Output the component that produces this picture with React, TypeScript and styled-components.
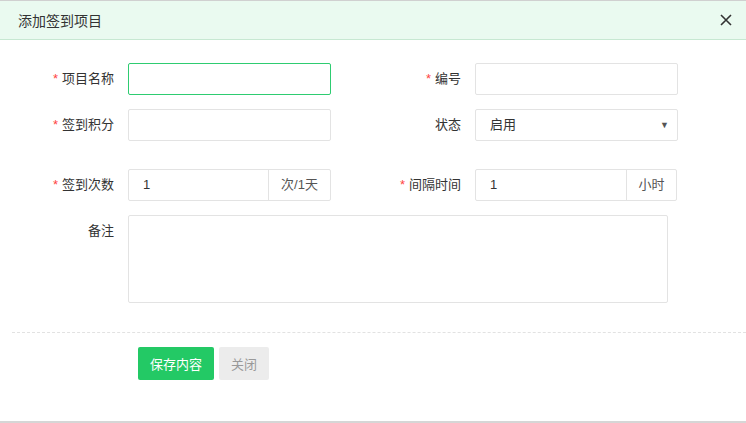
import styled, { createGlobalStyle } from "styled-components";

const Global = createGlobalStyle`
  body { margin: 0; background: #fff; font-family: "Liberation Sans", "Noto Sans CJK SC", sans-serif; }
`;

const Dialog = styled.div`
  width: 746px;
  height: 423px;
  box-sizing: border-box;
  border-bottom: 2px solid #d6d6d6;
  border-top: 1px solid #d0d0d0;
  display: flex;
  flex-direction: column;
`;

const Header = styled.div`
  height: 38px;
  background: #eafaf0;
  border-bottom: 1px solid #c7e8d2;
  display: flex;
  align-items: center;
  justify-content: space-between;
  padding: 0 14px 0 18px;
  font-size: 14px;
  color: #333;
`;

const Body = styled.div`
  padding-top: 23px;
  display: flex;
  flex-direction: column;
`;

const Row = styled.div<{ $top?: number }>`
  display: flex;
  align-items: flex-start;
  margin-top: ${(p) => p.$top ?? 0}px;
`;

const Label = styled.label<{ $w: number }>`
  width: ${(p) => p.$w}px;
  padding-right: 14px;
  box-sizing: border-box;
  text-align: right;
  font-size: 13px;
  color: #333;
  line-height: 32px;
  flex-shrink: 0;
`;

const Star = styled.span`
  color: #f44;
  margin-right: 4px;
`;

const Input = styled.div<{ $focus?: boolean; $w: number; $h?: number }>`
  width: ${(p) => p.$w}px;
  height: ${(p) => p.$h ?? 32}px;
  box-sizing: border-box;
  border: 1px solid ${(p) => (p.$focus ? "#2ecc71" : "#e3e3e3")};
  border-radius: 2px;
  padding: 0 14px;
  font-size: 13px;
  color: #333;
  line-height: 30px;
  position: relative;
  flex-shrink: 0;
`;

const Group = styled.div<{ $w: number }>`
  width: ${(p) => p.$w}px;
  height: 32px;
  display: flex;
  border: 1px solid #e3e3e3;
  border-radius: 2px;
  box-sizing: border-box;
  font-size: 13px;
  color: #333;
  flex-shrink: 0;
`;

const GroupValue = styled.div`
  flex: 1;
  padding: 0 14px;
  line-height: 30px;
`;

const Addon = styled.div<{ $w: number }>`
  width: ${(p) => p.$w}px;
  border-left: 1px solid #e3e3e3;
  text-align: center;
  line-height: 30px;
  color: #555;
`;

const Caret = styled.span`
  position: absolute;
  right: 8px;
  top: 0;
  font-size: 9px;
  color: #555;
`;

const Divider = styled.div`
  margin: 29px 0 0 12px;
  border-top: 1px dashed #e2e2e2;
`;

const Buttons = styled.div`
  display: flex;
  gap: 5px;
  padding: 14px 0 0 138px;
`;

const Button = styled.button<{ $primary?: boolean }>`
  height: 33px;
  padding: 0 12px;
  border: none;
  border-radius: 2px;
  font-family: inherit;
  font-size: 13px;
  background: ${(p) => (p.$primary ? "#23c965" : "#ececec")};
  color: ${(p) => (p.$primary ? "#fff" : "#999")};
`;

export default function App() {
  return (
    <>
      <Global />
      <Dialog>
        <Header>
          <span>添加签到项目</span>
          <svg width="12" height="12" viewBox="0 0 12 12">
            <path d="M1 1L11 11M11 1L1 11" stroke="#333" strokeWidth="1.6" />
          </svg>
        </Header>
        <Body>
          <Row>
            <Label $w={128}><Star>*</Star>项目名称</Label>
            <Input $w={203} $focus />
            <Label $w={144}><Star>*</Star>编号</Label>
            <Input $w={203} />
          </Row>
          <Row $top={14}>
            <Label $w={128}><Star>*</Star>签到积分</Label>
            <Input $w={203} />
            <Label $w={144}>状态</Label>
            <Input $w={203}>启用<Caret>▼</Caret></Input>
          </Row>
          <Row $top={28}>
            <Label $w={128}><Star>*</Star>签到次数</Label>
            <Group $w={203}><GroupValue>1</GroupValue><Addon $w={61}>次/1天</Addon></Group>
            <Label $w={144}><Star>*</Star>间隔时间</Label>
            <Group $w={202}><GroupValue>1</GroupValue><Addon $w={49}>小时</Addon></Group>
          </Row>
          <Row $top={14}>
            <Label $w={128}>备注</Label>
            <Input $w={540} $h={88} />
          </Row>
          <Divider />
          <Buttons>
            <Button $primary>保存内容</Button>
            <Button>关闭</Button>
          </Buttons>
        </Body>
      </Dialog>
    </>
  );
}
